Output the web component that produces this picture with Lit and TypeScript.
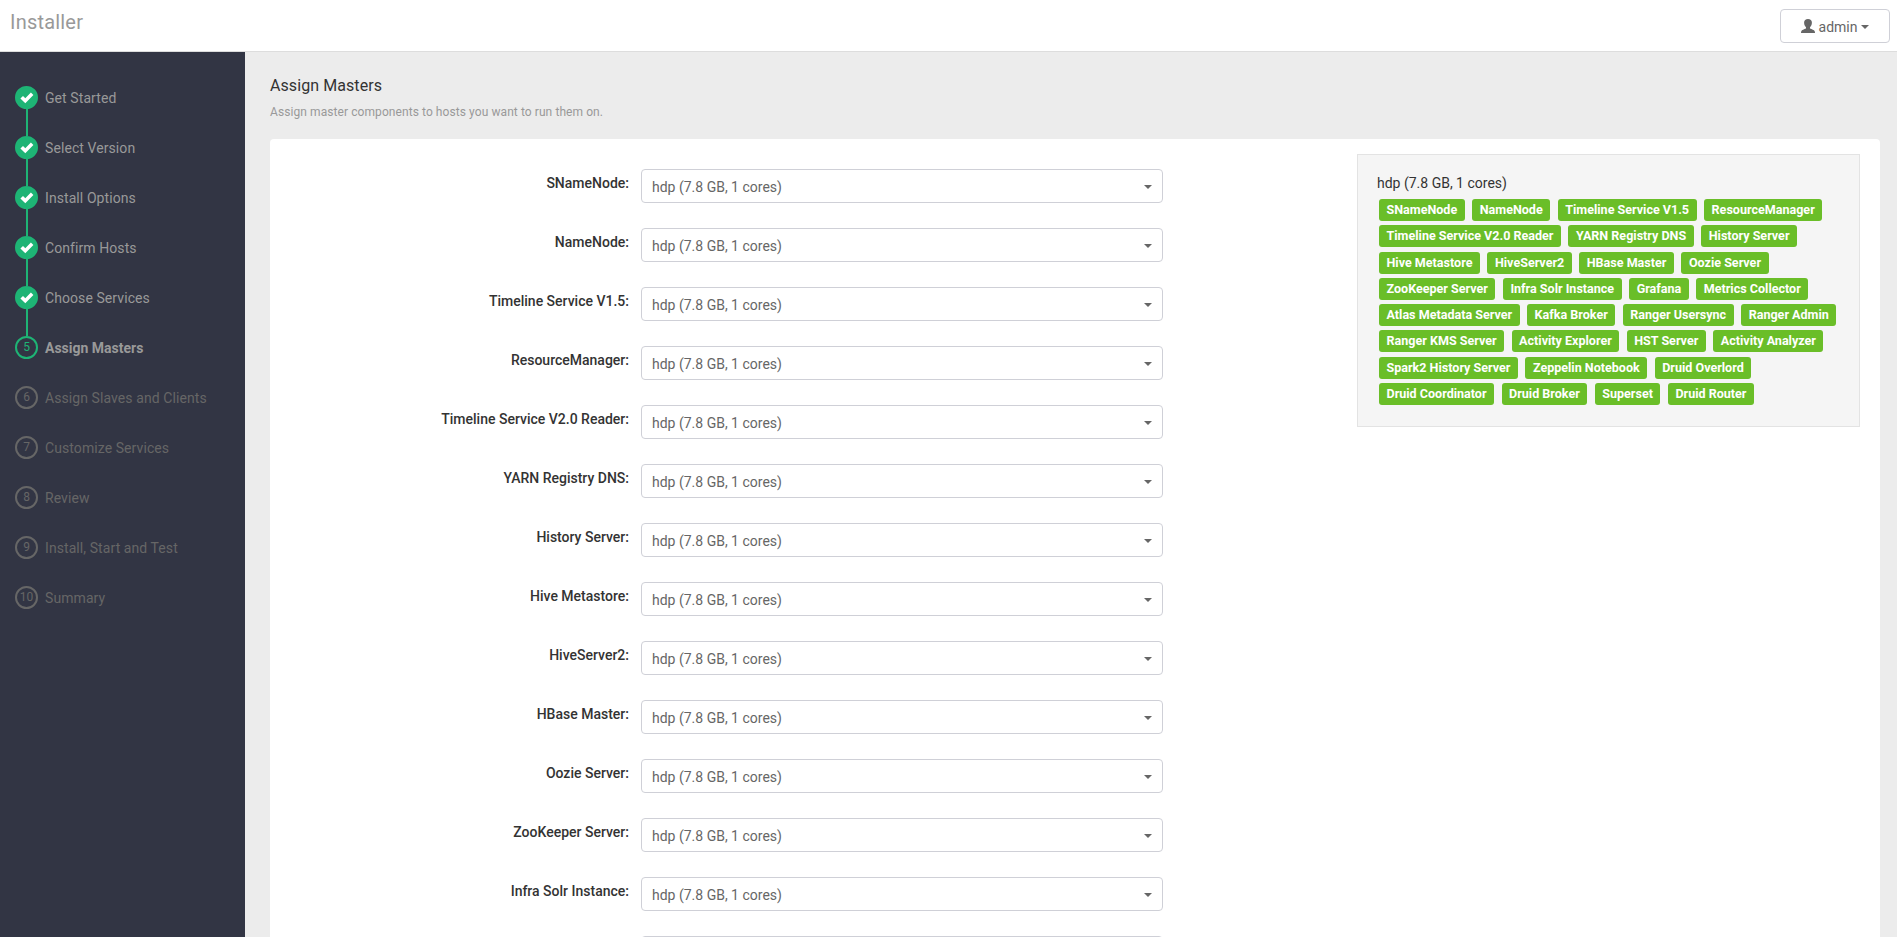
import { LitElement, html, css, svg } from "lit";
import { customElement } from "lit/decorators.js";

const HOST = "hdp (7.8 GB, 1 cores)";

const STEPS = [
  "Get Started",
  "Select Version",
  "Install Options",
  "Confirm Hosts",
  "Choose Services",
  "Assign Masters",
  "Assign Slaves and Clients",
  "Customize Services",
  "Review",
  "Install, Start and Test",
  "Summary",
];
const CURRENT = 5;

const MASTERS = [
  "SNameNode",
  "NameNode",
  "Timeline Service V1.5",
  "ResourceManager",
  "Timeline Service V2.0 Reader",
  "YARN Registry DNS",
  "History Server",
  "Hive Metastore",
  "HiveServer2",
  "HBase Master",
  "Oozie Server",
  "ZooKeeper Server",
  "Infra Solr Instance",
];

const BADGE_ROWS = [
  ["SNameNode", "NameNode", "Timeline Service V1.5", "ResourceManager"],
  ["Timeline Service V2.0 Reader", "YARN Registry DNS", "History Server"],
  ["Hive Metastore", "HiveServer2", "HBase Master", "Oozie Server"],
  ["ZooKeeper Server", "Infra Solr Instance", "Grafana", "Metrics Collector"],
  ["Atlas Metadata Server", "Kafka Broker", "Ranger Usersync", "Ranger Admin"],
  ["Ranger KMS Server", "Activity Explorer", "HST Server", "Activity Analyzer"],
  ["Spark2 History Server", "Zeppelin Notebook", "Druid Overlord"],
  ["Druid Coordinator", "Druid Broker", "Superset", "Druid Router"],
];

const check = svg`<path d="M0.4 6.6 L3 4 L5.3 6.2 L10.9 0.5 L13.4 3 L5.3 11.2 Z" fill="#fff"/>`;

@customElement("app-root")
export class AppRoot extends LitElement {
  static styles = css`
    :host {
      display: flex;
      flex-direction: column;
      height: 937px;
      overflow: hidden;
      background: #ececec;
      color: #333;
      font: 14px/20px Roboto, "Liberation Sans", sans-serif;
    }
    * {
      box-sizing: border-box;
    }
    .header {
      flex: none;
      display: flex;
      justify-content: space-between;
      align-items: flex-start;
      height: 52px;
      padding: 9px 7px 0 10px;
      background: #fff;
      border-bottom: 1px solid #ddd;
    }
    .brand {
      font-size: 20px;
      line-height: 26px;
      letter-spacing: 0.2px;
      color: #999;
    }
    .user {
      display: flex;
      align-items: center;
      justify-content: center;
      width: 110px;
      height: 34px;
      border: 1px solid #cfd0d7;
      border-radius: 4px;
      background: #fff;
      color: #666;
      font: inherit;
      padding: 2px 0 0;
    }
    .user svg {
      margin: -2px 4px 0 0;
    }
    .caret {
      width: 0;
      height: 0;
      border: 4px solid transparent;
      border-top-color: #666;
      border-bottom: 0;
    }
    .user .caret {
      margin-left: 4px;
    }
    .body {
      flex: 1;
      min-height: 0;
      display: flex;
    }
    .side {
      flex: none;
      width: 245px;
      padding: 34px 0 0 15px;
      background: #323544;
    }
    .step {
      display: flex;
      gap: 7px;
      height: 50px;
      color: #666;
    }
    .rail {
      display: flex;
      flex-direction: column;
      align-items: center;
      width: 23px;
    }
    .dot {
      flex: none;
      display: flex;
      align-items: center;
      justify-content: center;
      width: 23px;
      height: 23px;
      border: 2px solid #666;
      border-radius: 50%;
      font-size: 12px;
      line-height: 19px;
    }
    .line {
      width: 2px;
      flex: 1;
      margin-left: 1px;
      background: #1eb475;
    }
    .name {
      padding-top: 2px;
      letter-spacing: 0.08px;
    }
    .done,
    .current {
      color: #999;
    }
    .done .dot {
      background: #1eb475;
      border-color: #1eb475;
    }
    .current .dot {
      border-color: #1eb475;
      color: #1eb475;
    }
    .current .name {
      font-weight: 700;
      letter-spacing: 0;
    }
    .main {
      flex: 1;
      display: flex;
      flex-direction: column;
      padding: 24px 17px 0 25px;
    }
    .title {
      font-size: 16px;
      line-height: 20px;
      letter-spacing: 0.08px;
    }
    .sub {
      margin-top: 7px;
      font-size: 12px;
      line-height: 18px;
      letter-spacing: 0.08px;
      color: #999;
      margin-bottom: 18px;
    }
    .card {
      flex: 1;
      min-height: 0;
      display: flex;
      justify-content: space-between;
      align-items: flex-start;
      padding: 15px 20px 0 0;
      background: #fff;
      border-radius: 4px 4px 0 0;
    }
    .form {
      width: 893px;
      height: 100%;
      padding-top: 15px;
      overflow: hidden;
    }
    .row {
      display: flex;
      gap: 12px;
      height: 59px;
    }
    .label {
      width: 359px;
      padding-top: 4px;
      text-align: right;
      font-weight: 500;
    }
    .select {
      display: flex;
      align-items: center;
      justify-content: space-between;
      width: 522px;
      height: 34px;
      padding: 2px 10px 0;
      border: 1px solid #cfd0d7;
      border-radius: 4px;
      color: #666;
    }
    .panel {
      width: 503px;
      height: 273px;
      padding: 18px 19px 0;
      border: 1px solid #e3e3e3;
      background: #f5f5f5;
    }
    .badges {
      display: flex;
      flex-direction: column;
      gap: 4.25px;
      padding: 6.15px 0 0 2px;
    }
    .brow {
      display: flex;
      gap: 7.5px;
    }
    .badge {
      height: 22px;
      padding: 0 7.5px;
      border-radius: 3px;
      background: #6abe28;
      color: #fff;
      font-size: 12.55px;
      font-weight: 700;
      line-height: 21px;
      white-space: nowrap;
    }
  `;

  render() {
    return html`
      <header class="header">
        <div class="brand">Installer</div>
        <button class="user">
          <svg width="14" height="14" viewBox="0 0 14 14">
            <path
              fill="#666"
              d="M7 0C9.4 0 10.9 1.3 10.9 3.6C10.9 5.6 10.2 7.4 9 8.3V9.6C10.8 10.5 13.2 11 13.7 12.2C14 12.8 14 13.4 14 14H0C0 13.4 0 12.8 0.3 12.2C0.8 11 3.2 10.5 5 9.6V8.3C3.8 7.4 3.1 5.6 3.1 3.6C3.1 1.3 4.6 0 7 0Z"
            />
          </svg>
          <span>admin</span><span class="caret"></span>
        </button>
      </header>
      <div class="body">
        <nav class="side">
          ${STEPS.map(
            (s, i) => html`<div class="step ${i < CURRENT ? "done" : i === CURRENT ? "current" : ""}">
              <div class="rail">
                <div class="dot">
                  ${i < CURRENT
                    ? html`<svg width="14" height="12" viewBox="0 0 14 12">${check}</svg>`
                    : i}
                </div>
                ${i < CURRENT ? html`<div class="line"></div>` : ""}
              </div>
              <div class="name">${s}</div>
            </div>`
          )}
        </nav>
        <main class="main">
          <div class="title">Assign Masters</div>
          <div class="sub">Assign master components to hosts you want to run them on.</div>
          <section class="card">
            <div class="form">
              ${MASTERS.map(
                (m) => html`<div class="row">
                  <div class="label">${m}:</div>
                  <div class="select"><span>${HOST}</span><span class="caret"></span></div>
                </div>`
              )}
              <div class="row">
                <div class="label"></div>
                <div class="select"></div>
              </div>
            </div>
            <aside class="panel">
              <div>${HOST}</div>
              <div class="badges">
                ${BADGE_ROWS.map(
                  (r) => html`<div class="brow">${r.map((b) => html`<span class="badge">${b}</span>`)}</div>`
                )}
              </div>
            </aside>
          </section>
        </main>
      </div>
    `;
  }
}
